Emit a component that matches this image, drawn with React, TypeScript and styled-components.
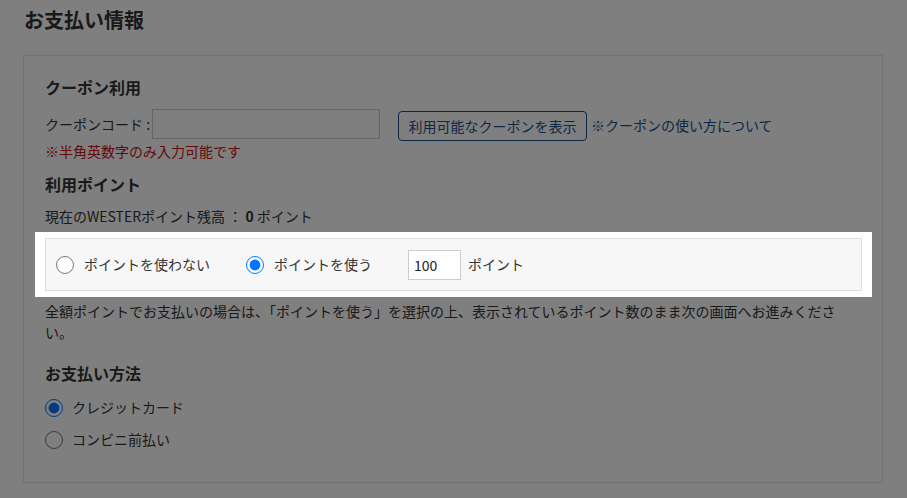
import React from "react";
import styled, { createGlobalStyle } from "styled-components";

const Global = createGlobalStyle`
  html, body { margin: 0; padding: 0; background: #fff; }
  body {
    font-family: "Noto Sans CJK JP", "Noto Sans", sans-serif;
    color: #333;
    font-size: 14px;
    line-height: 1.5;
  }
`;

const Page = styled.div`
  padding: 4px 24px 16px 23px;
`;

const Title = styled.h2`
  margin: 0 0 19px;
  font-size: 20px;
  font-weight: 700;
  line-height: 32px;
  padding-left: 1px;
`;

const Card = styled.section`
  border: 1px solid #e6e6e6;
  padding: 19px 20px 32px 21px;
`;

const SectionHeading = styled.h3<{ $bottom?: number }>`
  margin: 0 0 ${(p) => p.$bottom ?? 10}px;
  font-size: 16px;
  font-weight: 700;
  line-height: 24px;
`;

const CouponRow = styled.div`
  display: flex;
  align-items: flex-start;
  height: 32px;
`;

const FieldLabel = styled.label`
  line-height: 30px;
  margin-right: 2px;
`;

const CouponInput = styled.input`
  box-sizing: border-box;
  width: 228px;
  height: 30px;
  border: 1px solid #ccc;
  margin: 0 18px 0 0;
  padding: 0 6px;
  font: inherit;
`;

const OutlineButton = styled.button`
  box-sizing: border-box;
  margin-top: 2px;
  height: 30px;
  width: 189px;
  border: 1px solid #1b4f8c;
  border-radius: 4px;
  background: #fff;
  color: #1b4f8c;
  font: inherit;
  font-size: 14px;
  padding: 0;
  cursor: pointer;
`;

const HelpLink = styled.a`
  color: #1b4f8c;
  text-decoration: none;
  margin-left: 4px;
  line-height: 30px;
  margin-top: 1px;
`;

const Note = styled.p`
  margin: 0 0 10px;
  color: #c41212;
`;

const Balance = styled.p`
  margin: 0 0 5px;
  b { font-weight: 700; }
`;

const Spotlight = styled.div`
  position: relative;
  z-index: 20;
  background: #fff;
  margin: 0 -10px;
  padding: 6px 10px;
`;

const ChoiceBox = styled.div`
  display: flex;
  align-items: center;
  height: 51px;
  border: 1px solid #ddd;
  background: #f7f7f7;
  padding: 0 10px;
`;

const RadioLabel = styled.label<{ $gap?: number }>`
  display: inline-flex;
  align-items: center;
  gap: 10px;
  margin-right: ${(p) => p.$gap ?? 0}px;
  cursor: pointer;
`;

const Radio = styled.input.attrs({ type: "radio" })`
  width: 18px;
  height: 18px;
  margin: 0;
`;

const PointInput = styled.input`
  box-sizing: border-box;
  width: 53px;
  height: 30px;
  border: 1px solid #ccc;
  background: #fff;
  padding: 0 5px;
  font: inherit;
  font-size: 14px;
  color: #222;
  margin-right: 7px;
`;

const Paragraph = styled.p`
  margin: 4px 0 18px;
  max-width: 803px;
`;

const MethodList = styled.div`
  display: flex;
  flex-direction: column;
  gap: 11px;
`;

const MethodLabel = styled.label`
  display: flex;
  align-items: center;
  gap: 9px;
  height: 21px;
`;

const Overlay = styled.div`
  position: fixed;
  inset: 0;
  background: rgba(0, 0, 0, 0.5);
  z-index: 10;
`;

export default function App() {
  return (
    <>
      <Global />
      <Page>
        <Title>お支払い情報</Title>
        <Card>
          <SectionHeading>クーポン利用</SectionHeading>
          <CouponRow>
            <FieldLabel>クーポンコード :</FieldLabel>
            <CouponInput type="text" />
            <OutlineButton>利用可能なクーポンを表示</OutlineButton>
            <HelpLink href="#">※クーポンの使い方について</HelpLink>
          </CouponRow>
          <Note>※半角英数字のみ入力可能です</Note>
          <SectionHeading>利用ポイント</SectionHeading>
          <Balance>
            現在のWESTERポイント残高 ： <b>0</b> ポイント
          </Balance>
          <Spotlight>
            <ChoiceBox>
              <RadioLabel $gap={36}>
                <Radio name="pt" />
                ポイントを使わない
              </RadioLabel>
              <RadioLabel $gap={36}>
                <Radio name="pt" defaultChecked />
                ポイントを使う
              </RadioLabel>
              <PointInput type="text" defaultValue="100" />
              <span>ポイント</span>
            </ChoiceBox>
          </Spotlight>
          <Paragraph>
            全額ポイントでお支払いの場合は、「ポイントを使う」を選択の上、表示されているポイント数のまま次の画面へお進みください。
          </Paragraph>
          <SectionHeading $bottom={12}>お支払い方法</SectionHeading>
          <MethodList>
            <MethodLabel>
              <Radio name="pay" defaultChecked />
              クレジットカード
            </MethodLabel>
            <MethodLabel>
              <Radio name="pay" />
              コンビニ前払い
            </MethodLabel>
          </MethodList>
        </Card>
      </Page>
      <Overlay />
    </>
  );
}
